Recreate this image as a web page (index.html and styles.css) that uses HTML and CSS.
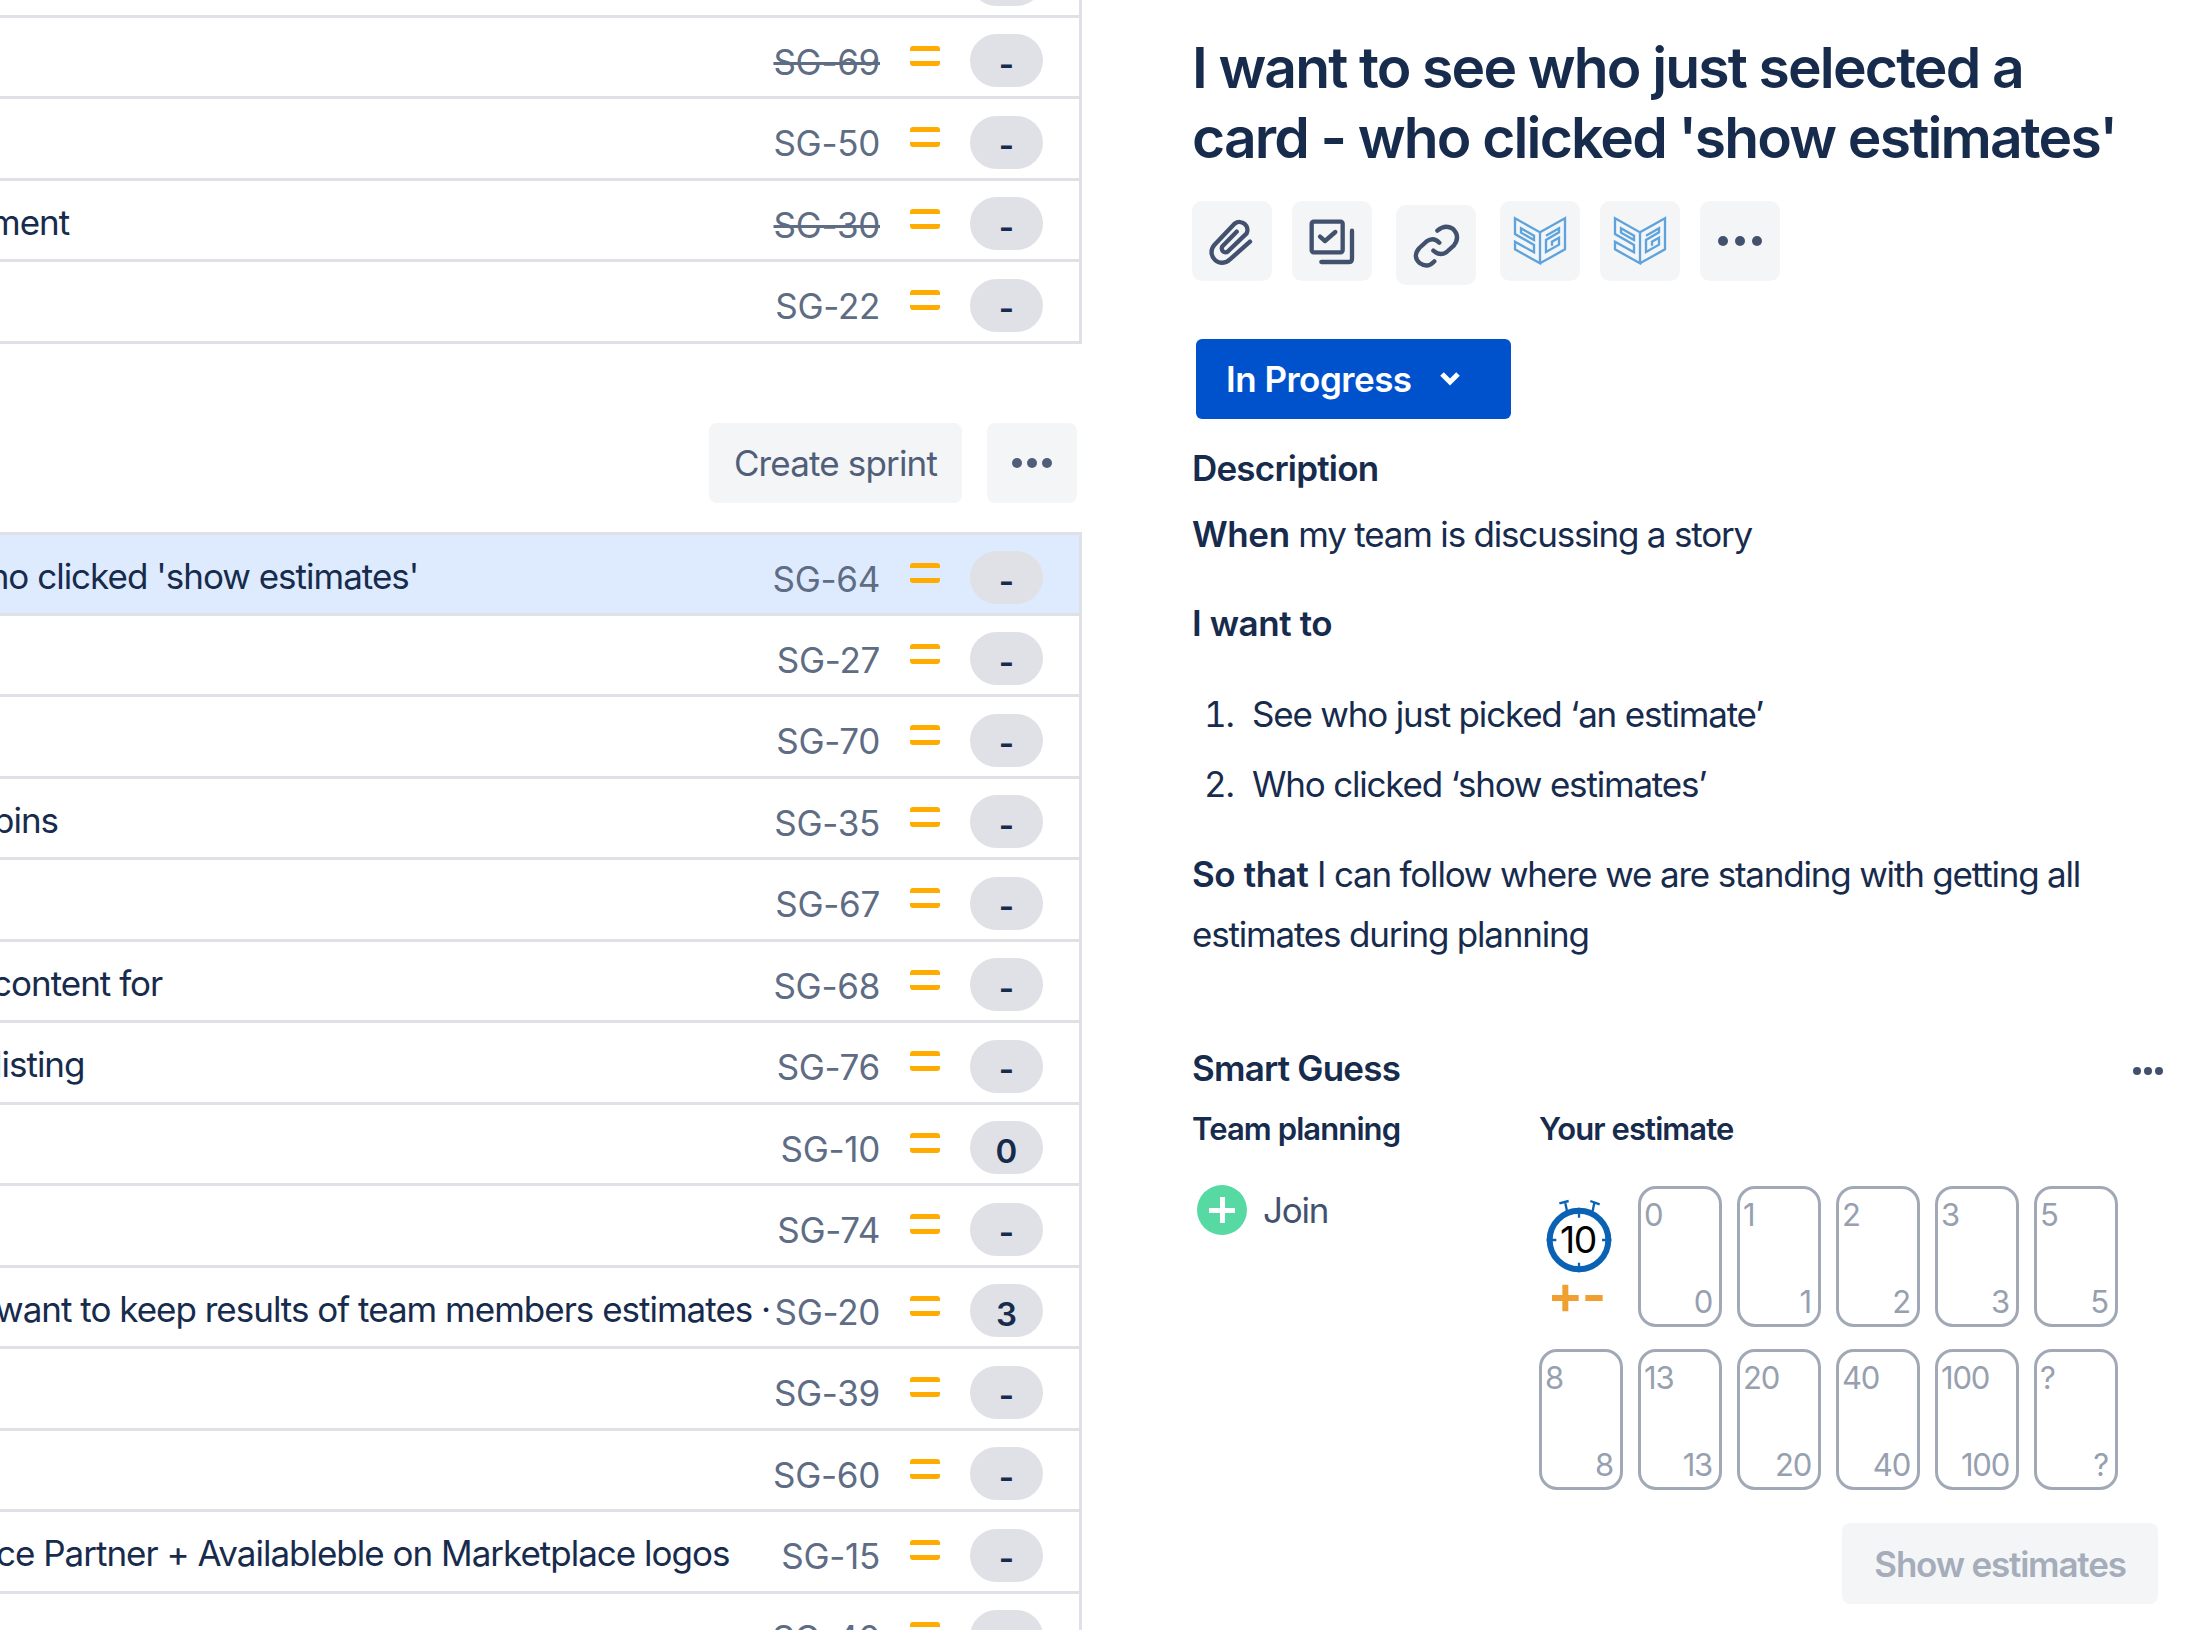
FILE: index.html
```html
<!DOCTYPE html>
<html lang="en">
<head>
  <meta charset="UTF-8">
  <title>Backlog</title>
  <link rel="stylesheet" href="styles.css">
</head>
<body>
  <!-- Backlog list -->
  <div class="backlog">
    <div class="row"><span class="row-title"></span><span class="key">SG-71</span><span class="priority"></span><span class="pill">-</span></div>
    <div class="row"><span class="row-title"></span><span class="key done">SG-69</span><span class="priority"></span><span class="pill">-</span></div>
    <div class="row"><span class="row-title"></span><span class="key">SG-50</span><span class="priority"></span><span class="pill">-</span></div>
    <div class="row"><span class="row-title"><span class="cut-ment">ment</span></span><span class="key done">SG-30</span><span class="priority"></span><span class="pill">-</span></div>
    <div class="row"><span class="row-title"></span><span class="key">SG-22</span><span class="priority"></span><span class="pill">-</span></div>

    <div class="sprint-bar">
      <button class="bar-button">Create sprint</button>
      <button class="bar-button bar-more"><span class="dot"></span><span class="dot"></span><span class="dot"></span></button>
    </div>

    <div class="row first selected"><span class="row-title"><span class="cut-who">who clicked 'show estimates'</span></span><span class="key">SG-64</span><span class="priority"></span><span class="pill">-</span></div>
    <div class="row"><span class="row-title"></span><span class="key">SG-27</span><span class="priority"></span><span class="pill">-</span></div>
    <div class="row"><span class="row-title"></span><span class="key">SG-70</span><span class="priority"></span><span class="pill">-</span></div>
    <div class="row"><span class="row-title"><span class="cut-pins">pins</span></span><span class="key">SG-35</span><span class="priority"></span><span class="pill">-</span></div>
    <div class="row"><span class="row-title"></span><span class="key">SG-67</span><span class="priority"></span><span class="pill">-</span></div>
    <div class="row"><span class="row-title"><span class="cut-content">content for</span></span><span class="key">SG-68</span><span class="priority"></span><span class="pill">-</span></div>
    <div class="row"><span class="row-title"><span class="cut-listing">listing</span></span><span class="key">SG-76</span><span class="priority"></span><span class="pill">-</span></div>
    <div class="row"><span class="row-title"></span><span class="key">SG-10</span><span class="priority"></span><span class="pill">0</span></div>
    <div class="row"><span class="row-title"></span><span class="key">SG-74</span><span class="priority"></span><span class="pill">-</span></div>
    <div class="row"><span class="row-title"><span class="cut-want">want to keep results of team members estimates ·</span></span><span class="key">SG-20</span><span class="priority"></span><span class="pill">3</span></div>
    <div class="row"><span class="row-title"></span><span class="key">SG-39</span><span class="priority"></span><span class="pill">-</span></div>
    <div class="row"><span class="row-title"></span><span class="key">SG-60</span><span class="priority"></span><span class="pill">-</span></div>
    <div class="row"><span class="row-title"><span class="cut-partner">ce Partner + Availableble on Marketplace logos</span></span><span class="key">SG-15</span><span class="priority"></span><span class="pill">-</span></div>
    <div class="row"><span class="row-title"></span><span class="key">SG-40</span><span class="priority"></span><span class="pill">-</span></div>
  </div>

  <!-- Issue detail -->
  <div class="detail">
    <h1 class="issue-title">I want to see who just selected a card - who clicked 'show estimates'</h1>

    <div class="toolbar">
      <button class="tool">
        <svg viewBox="36 33 240 240"><path class="line" d="M210 155 L150 208 A30 30 0 0 1 103 165 L165 100 A24 24 0 0 1 200 130 L145 183 A11 11 0 0 1 128 168 L170 125"/></svg>
      </button>
      <button class="tool">
        <svg viewBox="336 33 240 240"><rect class="line" x="395" y="95" width="93" height="92" rx="6"/><path class="line" d="M420 140 L435 153 L466 126"/><path class="line" d="M516 122 V206 Q516 216 506 216 H424"/></svg>
      </button>
      <button class="tool tool-low">
        <svg viewBox="648 45 240 240"><path class="line" d="M763 214 Q743 236 720 220 Q696 200 718 174 L740 154 Q760 140 778 158"/><path class="line" d="M772 122 Q795 102 818 116 Q842 138 822 166 L800 186 Q780 200 760 182"/></svg>
      </button>
      <button class="tool">
        <svg viewBox="30 33 240 240"><path class="logo" d="M75 85 L150 127 L150 220 L75 178 L75 155 L132 187 L132 165 L75 132 Z M93 115 L132 137 L132 150 L93 128 Z"/><path class="logo" d="M150 127 L225 85 L225 178 L150 220 M168 137 L207 115 L207 127 L168 150 L168 186 L207 164 L207 143 L186 155 L186 167"/></svg>
      </button>
      <button class="tool">
        <svg viewBox="30 33 240 240"><path class="logo" d="M75 85 L150 127 L150 220 L75 178 L75 155 L132 187 L132 165 L75 132 Z M93 115 L132 137 L132 150 L93 128 Z"/><path class="logo" d="M150 127 L225 85 L225 178 L150 220 M168 137 L207 115 L207 127 L168 150 L168 186 L207 164 L207 143 L186 155 L186 167"/></svg>
      </button>
      <button class="tool">
        <span class="dot dark"></span><span class="dot dark"></span><span class="dot dark"></span>
      </button>
    </div>

    <button class="status">In Progress
      <svg class="chevron" viewBox="0 0 24 16"><path d="M4 3 L12 11 L20 3"/></svg>
    </button>

    <h2 class="section-head">Description</h2>
    <p class="para para-first"><strong>When</strong> my team is discussing a story</p>
    <p class="para"><strong>I want to</strong></p>
    <ol class="steps">
      <li>See who just picked ‘an estimate’</li>
      <li>Who clicked ‘show estimates’</li>
    </ol>
    <p class="para"><strong>So that</strong> I can follow where we are standing with getting all estimates during planning</p>

    <!-- Smart Guess panel -->
    <div class="guess-head">
      <h2 class="section-head">Smart Guess</h2>
      <span class="guess-more"><span class="dot small"></span><span class="dot small"></span><span class="dot small"></span></span>
    </div>
    <div class="guess">
      <div class="guess-team">
        <div class="guess-label">Team planning</div>
        <div class="join">
          <span class="join-icon"></span>
          <span>Join</span>
        </div>
      </div>
      <div class="guess-vote">
        <div class="guess-label">Your estimate</div>
        <div class="cards">
          <div class="timer">
            <svg viewBox="185 50 225 360">
              <path class="tick-thin" d="M255 72 L260 95 M237 72 L265 65 M337 95 L342 70 M330 65 L358 75"/>
              <circle class="dial" cx="296" cy="182" r="88"/>
              <path class="tick" d="M296 85 V115 M296 250 V279 M199 182 H228 M365 182 H393"/>
              <text class="timer-num" x="293" y="220">10</text>
              <path class="adjust" d="M215 356 H295 M255 316 V396 M315 356 H367"/>
            </svg>
          </div>
          <div class="card"><span>0</span><span class="card-end">0</span></div>
          <div class="card"><span>1</span><span class="card-end">1</span></div>
          <div class="card"><span>2</span><span class="card-end">2</span></div>
          <div class="card"><span>3</span><span class="card-end">3</span></div>
          <div class="card"><span>5</span><span class="card-end">5</span></div>
          <div class="card"><span>8</span><span class="card-end">8</span></div>
          <div class="card"><span>13</span><span class="card-end">13</span></div>
          <div class="card"><span>20</span><span class="card-end">20</span></div>
          <div class="card"><span>40</span><span class="card-end">40</span></div>
          <div class="card"><span>100</span><span class="card-end">100</span></div>
          <div class="card"><span>?</span><span class="card-end">?</span></div>
        </div>
      </div>
    </div>
    <div class="guess-actions">
      <button class="show-estimates">Show estimates</button>
    </div>
  </div>
</body>
</html>
```

FILE: styles.css
```css
/* Global */
* {
  box-sizing: border-box;
}

html, body {
  height: 100%;
}

body {
  margin: 0;
  display: flex;
  overflow: hidden;
  background: #fff;
  color: #172b4d;
  font-family: Inter, "Liberation Sans", sans-serif;
  font-size: 35px;
  letter-spacing: -1.2px;
}

button {
  font-family: inherit;
  letter-spacing: inherit;
  border: none;
  cursor: pointer;
}

/* Backlog */
.backlog {
  width: 1082px;
  flex-shrink: 0;
  margin-top: -64px;
  height: 1720px;
  overflow: hidden;
}

.row {
  height: 81.5px;
  display: flex;
  align-items: center;
  padding-right: 36px;
  border-right: 3px solid #dfe1e6;
  border-bottom: 3px solid #dfe1e6;
}

.row.first {
  height: 84px;
  border-top: 3px solid #dfe1e6;
}

.row.selected {
  background: #deebff;
}

.row-title {
  flex: 1;
  min-width: 0;
  white-space: nowrap;
  overflow: hidden;
  margin-top: 4px;
  letter-spacing: -1px;
}

/* Titles run off the left edge of the crop */
.cut-ment { margin-left: -10px; }
.cut-who { margin-left: -39px; }
.cut-pins { margin-left: -7px; }
.cut-content { margin-left: -8px; }
.cut-listing { margin-left: -6px; }
.cut-want { margin-left: -5px; }
.cut-partner { margin-left: -4px; }

.key {
  color: #5e6c84;
  margin-top: 10px;
  letter-spacing: -0.3px;
}

.key.done {
  text-decoration: line-through;
}

.priority {
  width: 30px;
  height: 20px;
  margin: -2px 30px 0 30px;
  border-top: 5px solid #ffab00;
  border-bottom: 5px solid #ffab00;
  border-radius: 3px;
}

.pill {
  width: 73px;
  height: 53px;
  border-radius: 27px;
  margin-top: 8px;
  background: #dfe1e6;
  font-size: 33px;
  font-weight: 600;
  letter-spacing: 0;
  display: flex;
  justify-content: center;
  align-items: center;
  padding-top: 6px;
}

/* Sprint bar */
.sprint-bar {
  display: flex;
  justify-content: flex-end;
  gap: 25px;
  padding: 79px 5px 29px 0;
}

.bar-button {
  height: 80px;
  padding: 0 25px;
  background: #f4f5f7;
  color: #505f79;
  border-radius: 8px;
  font-size: 35px;
  letter-spacing: -0.85px;
}

.bar-more {
  width: 90px;
  padding: 0;
  display: flex;
  justify-content: center;
  align-items: center;
  gap: 5px;
}

.dot {
  width: 10px;
  height: 10px;
  border-radius: 50%;
  background: #505f79;
}

.dot.dark {
  background: #42526e;
}

.dot.small {
  width: 8px;
  height: 8px;
  background: #42526e;
}

/* Issue detail */
.detail {
  flex: 1;
  min-width: 0;
  padding-left: 110px;
}

.issue-title {
  margin: 33px 0 0;
  width: 940px;
  font-size: 57px;
  line-height: 70px;
  font-weight: 600;
  letter-spacing: -1.85px;
}

.toolbar {
  display: flex;
  align-items: flex-start;
  gap: 20px;
  margin-top: 28px;
}

.tool {
  width: 80px;
  height: 80px;
  padding: 0;
  background: #f4f5f7;
  border-radius: 10px;
  display: flex;
  justify-content: center;
  align-items: center;
  gap: 7px;
}

.tool svg {
  width: 80px;
  height: 80px;
  display: block;
}

.tool-low {
  margin: 4px 4px 0 4px;
}

.line {
  fill: none;
  stroke: #42526e;
  stroke-width: 13;
  stroke-linecap: round;
  stroke-linejoin: round;
}

.logo {
  fill: none;
  stroke: #5ea3dc;
  stroke-width: 7;
}

.status {
  display: flex;
  align-items: center;
  width: 315px;
  height: 80px;
  margin: 54px 0 0 4px;
  padding: 0 0 0 30px;
  background: #0052cc;
  color: #fff;
  border-radius: 6px;
  font-size: 35px;
  font-weight: 600;
  letter-spacing: -0.5px;
  text-align: left;
}

.chevron {
  width: 24px;
  height: 16px;
  margin-left: 26px;
  fill: none;
  stroke: #fff;
  stroke-width: 5;
}

.section-head {
  margin: 0;
  font-size: 35px;
  line-height: 60px;
  font-weight: 600;
  letter-spacing: -0.8px;
}

.status + .section-head {
  margin-top: 19px;
}

.para {
  margin: 29px 0 0;
  line-height: 60px;
}

.para-first {
  margin-top: 6px;
}

.para strong {
  font-weight: 600;
  letter-spacing: -0.4px;
}

.steps {
  margin: 31px 0 0;
  padding-left: 50px;
  line-height: 60px;
}

.steps li {
  padding-left: 10px;
}

.steps li + li {
  margin-top: 10px;
}

.steps + .para {
  margin-top: 30px;
}

/* Smart Guess */
.guess-head {
  display: flex;
  justify-content: space-between;
  align-items: center;
  margin-top: 74px;
  padding-right: 23px;
}

.guess-more {
  display: flex;
  gap: 3px;
  margin-top: 6px;
}

.guess {
  display: flex;
  margin-top: 6px;
}

.guess-team {
  width: 347px;
  flex-shrink: 0;
}

.guess-label {
  font-size: 31px;
  line-height: 50px;
  font-weight: 600;
  letter-spacing: -0.9px;
}

.join {
  display: flex;
  align-items: center;
  gap: 16px;
  margin: 31px 0 0 5px;
  color: #42526e;
}

.join-icon {
  width: 50px;
  height: 50px;
  border-radius: 50%;
  background:
    linear-gradient(#fff, #fff) center / 26px 5px no-repeat,
    linear-gradient(#fff, #fff) center / 5px 26px no-repeat,
    #57d9a3;
}

.cards {
  display: grid;
  grid-template-columns: repeat(6, 84px);
  grid-auto-rows: 141px;
  gap: 22px 15px;
  margin-top: 32px;
}

.timer svg {
  display: block;
  width: 75px;
  height: 120px;
  margin: 10px 0 0 3px;
}

.tick-thin {
  fill: none;
  stroke: #0a62b5;
  stroke-width: 7;
}

.dial {
  fill: #fff;
  stroke: #0a62b5;
  stroke-width: 18;
}

.tick {
  fill: none;
  stroke: #0a62b5;
  stroke-width: 7;
}

.timer-num {
  font-family: Inter, sans-serif;
  font-size: 112px;
  letter-spacing: -4px;
  text-anchor: middle;
  fill: #000;
}

.adjust {
  fill: none;
  stroke: #f0a030;
  stroke-width: 18;
}

.card {
  border: 3px solid #a1a9b7;
  border-radius: 18px;
  padding: 4px 7px 0 3px;
  display: flex;
  flex-direction: column;
  justify-content: space-between;
  color: #97a0af;
  font-size: 31px;
  line-height: 44px;
}

.card-end {
  text-align: right;
}

.guess-actions {
  display: flex;
  justify-content: flex-end;
  margin-top: 33px;
  padding-right: 28px;
}

.show-estimates {
  width: 316px;
  height: 81px;
  background: #f4f5f7;
  color: #a5adba;
  border-radius: 8px;
  font-size: 35px;
  font-weight: 600;
}
```
